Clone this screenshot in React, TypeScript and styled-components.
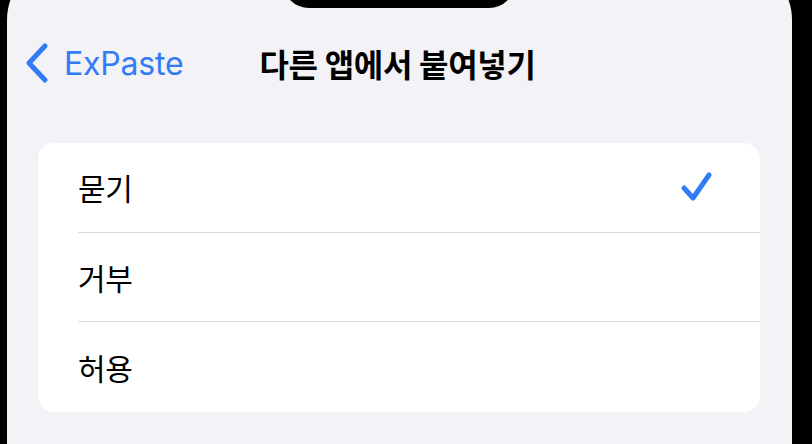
import styled, { createGlobalStyle } from 'styled-components';

const GlobalStyle = createGlobalStyle`
  html, body {
    margin: 0;
    padding: 0;
    background: #000;
    overflow: hidden;
  }
  body {
    font-family: "Noto Sans CJK KR", "Noto Sans", sans-serif;
    -webkit-font-smoothing: antialiased;
  }
`;

const Frame = styled.div`
  width: 812px;
  height: 444px;
  overflow: hidden;
  background: #000;
`;

const Screen = styled.div`
  position: relative;
  margin: -40px 20px 0 7px;
  padding-top: 40px;
  height: 520px;
  border-radius: 60px;
  background: #f2f2f7;
`;

const Notch = styled.div`
  position: absolute;
  top: 0;
  left: 276px;
  width: 232px;
  height: 48px;
  background: #000;
  border-radius: 0 0 26px 26px;
`;

const NavBar = styled.div`
  display: grid;
  grid-template-columns: 1fr auto 1fr;
  align-items: center;
  height: 126px;
  padding: 0 18px;
`;

const BackButton = styled.div`
  display: flex;
  align-items: center;
  gap: 15px;
  color: #317cf5;
  font-family: Inter, "Noto Sans", sans-serif;
  font-size: 32px;
  letter-spacing: -0.2px;
`;

const Title = styled.div`
  font-size: 32px;
  font-weight: 600;
  color: #000;
  letter-spacing: -0.3px;
  transform: translateX(-2px);
`;

const Group = styled.div`
  margin: 17px 32px 0 31px;
  background: #fff;
  border-radius: 16px;
  overflow: hidden;
`;

const Row = styled.div`
  height: 89.67px;
  padding-left: 40px;
  display: flex;
`;

const RowInner = styled.div<{ $last?: boolean }>`
  flex: 1;
  display: flex;
  align-items: center;
  justify-content: space-between;
  padding-right: 46px;
  border-bottom: ${p => (p.$last ? 'none' : '1px solid #d9d9dc')};
`;

const Label = styled.span`
  font-size: 30px;
  color: #000;
  letter-spacing: -0.3px;
`;

const Chevron = () => (
  <svg width="24" height="42" viewBox="0 0 24 42" fill="none">
    <path d="M20 4 L4 21 L20 38" stroke="#317cf5" strokeWidth="5" strokeLinecap="round" strokeLinejoin="round" />
  </svg>
);

const Check = () => (
  <svg width="34" height="34" viewBox="0 0 34 34" fill="none">
    <path d="M4 18 L13 28 L29 5" stroke="#317cf5" strokeWidth="5" strokeLinecap="round" strokeLinejoin="round" />
  </svg>
);

const options = ['묻기', '거부', '허용'];

export default function App() {
  const selected = 0;
  return (
    <Frame>
      <GlobalStyle />
      <Screen>
        <Notch />
        <NavBar>
          <BackButton>
            <Chevron />
            ExPaste
          </BackButton>
          <Title>다른 앱에서 붙여넣기</Title>
          <div />
        </NavBar>
        <Group>
          {options.map((opt, i) => (
            <Row key={opt}>
              <RowInner $last={i === options.length - 1}>
                <Label>{opt}</Label>
                {i === selected && <Check />}
              </RowInner>
            </Row>
          ))}
        </Group>
      </Screen>
    </Frame>
  );
}
